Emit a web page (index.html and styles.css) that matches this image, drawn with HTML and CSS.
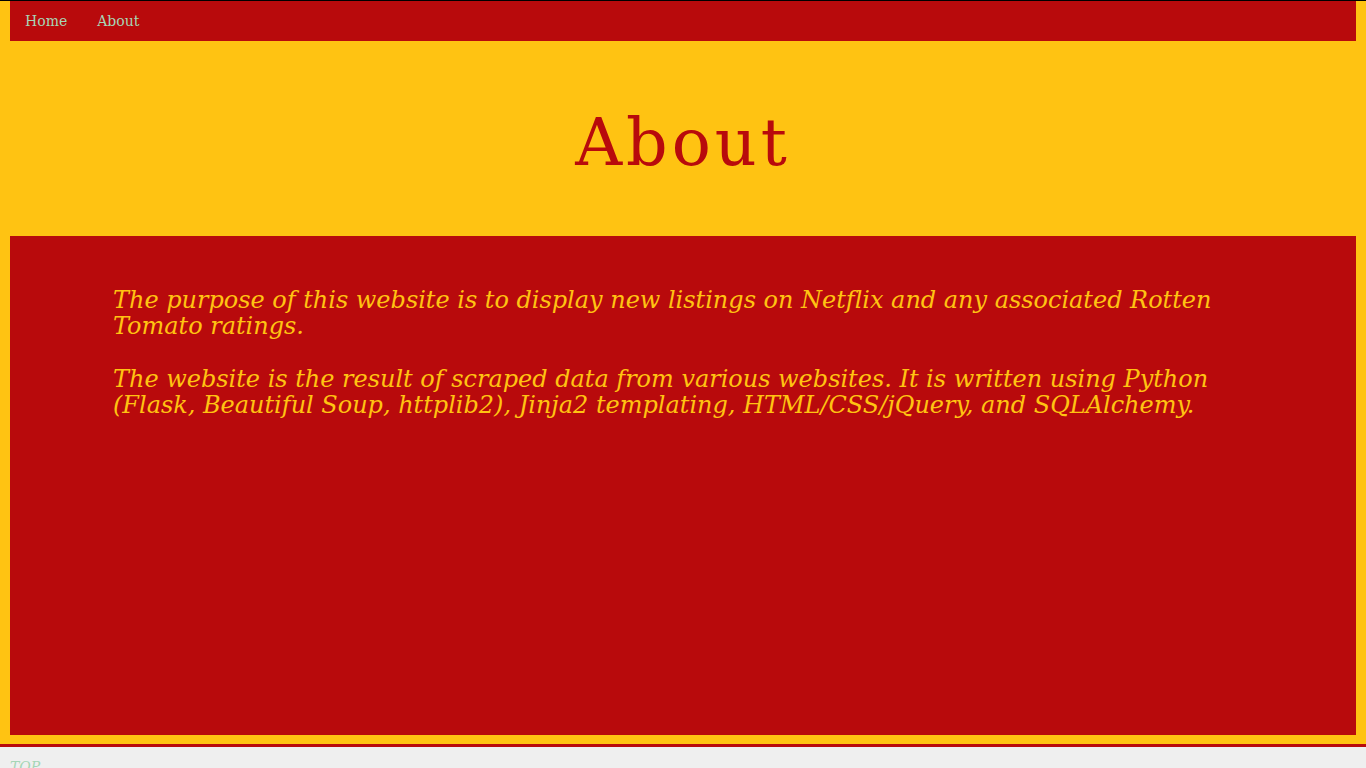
FILE: index.html
```html
<!DOCTYPE html>
<html>
<head>
<meta charset="utf-8">
<link rel="stylesheet" href="styles.css">
</head>
<body>
<div class="page">
  <nav class="nav">
    <a href="#">Home</a>
    <a href="#">About</a>
  </nav>
  <header class="hero">
    <h1>About</h1>
  </header>
  <main class="content">
    <p>The purpose of this website is to display new listings on Netflix and any associated Rotten Tomato ratings.</p>
    <p>The website is the result of scraped data from various websites. It is written using Python (Flask, Beautiful Soup, httplib2), Jinja2 templating, HTML/CSS/jQuery, and SQLAlchemy.</p>
  </main>
</div>
<footer class="footer">
  <a href="#">TOP</a>
</footer>
</body>
</html>
```
FILE: styles.css
```css
html, body {
  margin: 0;
  padding: 0;
}
body {
  font-family: "DejaVu Serif", serif;
  background: #efefef;
  border-top: 1px solid #000;
}
.page {
  background: #ffc312;
  padding: 0 10px 9px;
}
.nav {
  background: #b80a0c;
  height: 40px;
  display: flex;
  align-items: center;
  padding: 0 15px;
  gap: 30px;
}
.nav a {
  color: #a6d6b6;
  text-decoration: none;
  font-size: 14px;
}
.hero {
  height: 195px;
  box-sizing: border-box;
  padding-top: 8px;
  display: flex;
  align-items: center;
  justify-content: center;
}
.hero h1 {
  margin: 0;
  color: #b80a0c;
  font-weight: normal;
  font-size: 65px;
  letter-spacing: 4px;
}
.content {
  background: #b80a0c;
  height: 499px;
  box-sizing: border-box;
  padding: 51px 103px 50px;
}
.content p {
  margin: 0 0 27px;
  color: #ffc312;
  font-style: italic;
  font-size: 24px;
  line-height: 26px;
  letter-spacing: -0.02px;
}
.footer {
  border-top: 3px solid #b80a0c;
  height: 30px;
  padding: 10px 10px 0;
}
.footer a {
  color: #a6d6b6;
  font-style: italic;
  font-size: 14px;
  text-decoration: none;
}
```
